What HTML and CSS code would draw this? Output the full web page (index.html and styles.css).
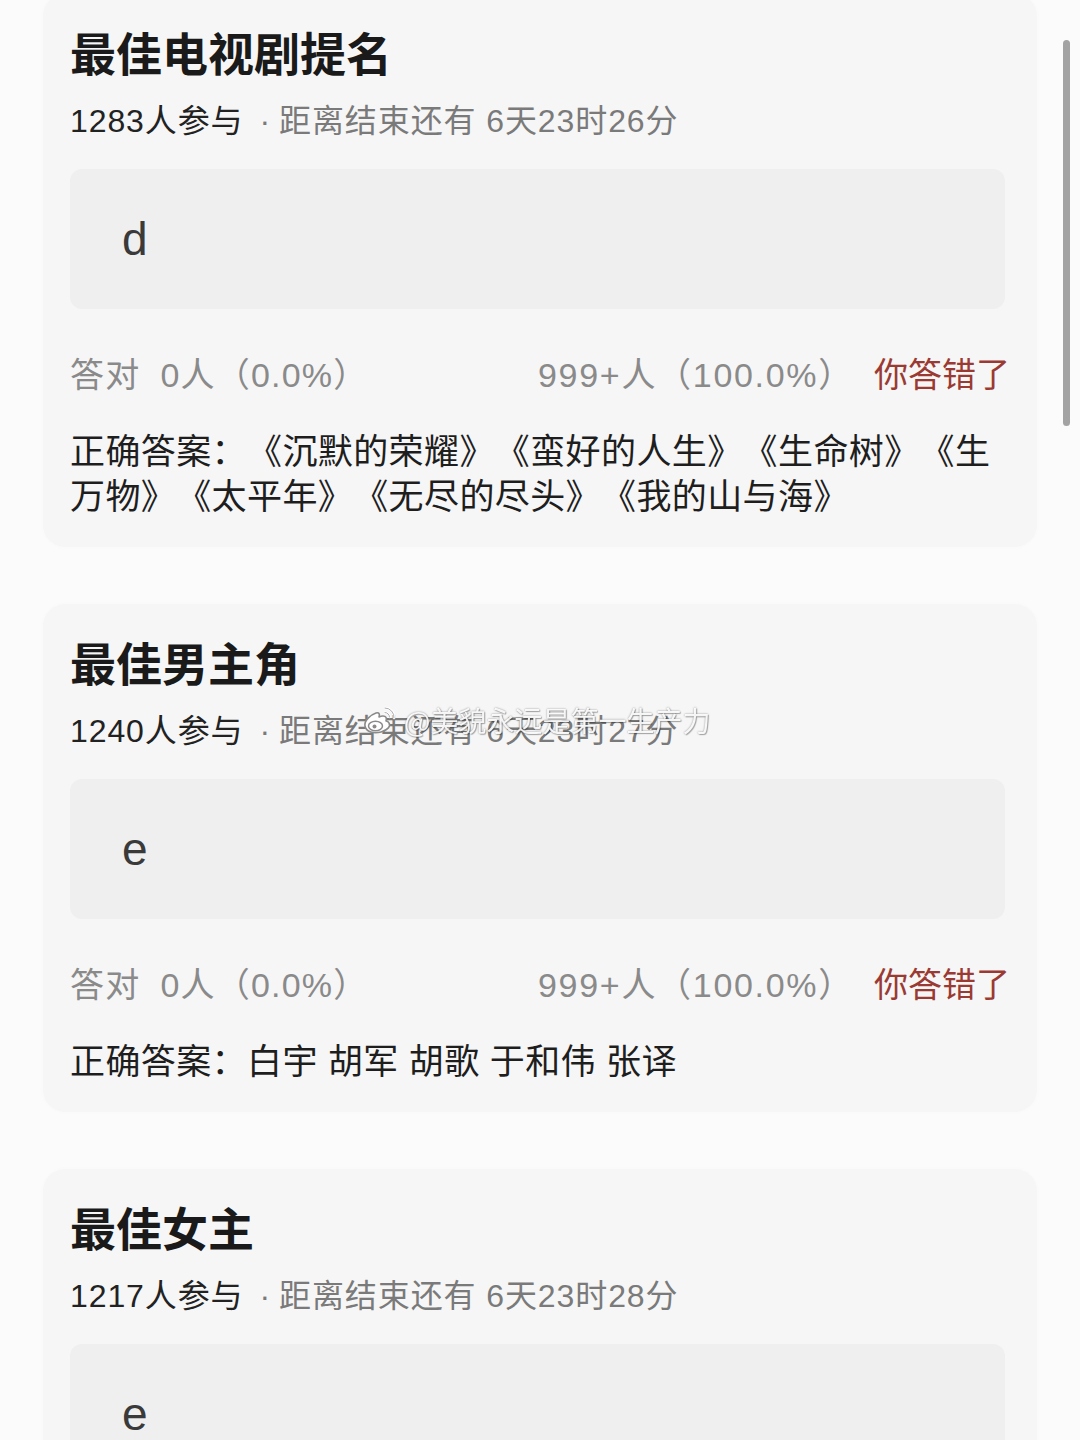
FILE: index.html
```html
<!DOCTYPE html>
<html lang="zh-CN">
<head>
<meta charset="utf-8">
<title>竞猜</title>
<link rel="stylesheet" href="styles.css">
</head>
<body>
<main class="list">
  <section class="card">
    <h2 class="card-title">最佳电视剧提名</h2>
    <p class="meta"><span class="count">1283人参与</span><span class="sep">·</span>距离结束还有 6天23时26分</p>
    <div class="answer">d</div>
    <div class="stats">
      <span class="ok"><span class="ok-label">答对</span>0人（0.0%）</span>
      <span class="wrong">999+人（100.0%）</span>
      <span class="verdict">你答错了</span>
    </div>
    <p class="correct">正确答案：《沉默的荣耀》《蛮好的人生》《生命树》《生万物》《太平年》《无尽的尽头》《我的山与海》</p>
  </section>

  <section class="card">
    <h2 class="card-title">最佳男主角</h2>
    <p class="meta"><span class="count">1240人参与</span><span class="sep">·</span>距离结束还有 6天23时27分</p>
    <div class="answer">e</div>
    <div class="stats">
      <span class="ok"><span class="ok-label">答对</span>0人（0.0%）</span>
      <span class="wrong">999+人（100.0%）</span>
      <span class="verdict">你答错了</span>
    </div>
    <p class="correct">正确答案：白宇 胡军 胡歌 于和伟 张译</p>
  </section>

  <section class="card">
    <h2 class="card-title">最佳女主</h2>
    <p class="meta"><span class="count">1217人参与</span><span class="sep">·</span>距离结束还有 6天23时28分</p>
    <div class="answer">e</div>
  </section>
</main>

<div class="scroll-indicator"></div>

<div class="watermark">
  <svg class="wb-logo" width="36" height="32" viewBox="0 0 36 32" aria-hidden="true">
    <path d="M14 9 C8 11 2 17 3 22 C4 28 12 30 19 28 C26 26 29 22 27 19 C26 17 24 17 24 17 C25 14 24 12 21 12 C19 12 17 13 17 13 C18 10 17 8 14 9 Z" fill="#ffffff" stroke="#8a8a8a" stroke-width="1.6" stroke-linejoin="round"/>
    <ellipse cx="13.5" cy="22" rx="7" ry="4.8" fill="none" stroke="#8a8a8a" stroke-width="1.5"/>
    <circle cx="12.5" cy="22.5" r="2" fill="#8a8a8a"/>
    <path d="M23 4 A9 9 0 0 1 32 14" fill="none" stroke="#ffffff" stroke-width="2.6" stroke-linecap="round"/>
    <path d="M23 4 A9 9 0 0 1 32 14" fill="none" stroke="#8a8a8a" stroke-width="1" stroke-linecap="round" opacity="0.7"/>
    <path d="M23 8.5 A4.5 4.5 0 0 1 27.5 13" fill="none" stroke="#ffffff" stroke-width="2.4" stroke-linecap="round"/>
    <path d="M23 8.5 A4.5 4.5 0 0 1 27.5 13" fill="none" stroke="#8a8a8a" stroke-width="1" stroke-linecap="round" opacity="0.7"/>
  </svg>
  <span class="wm-text">@美貌永远是第一生产力</span>
</div>
</body>
</html>
```

FILE: styles.css
```css
html {
  overflow: hidden;
}

body {
  margin: 0;
  background: #fbfbfb;
  font-family: "Liberation Sans", "Noto Sans CJK SC", sans-serif;
  color: #1c1c1c;
  text-spacing-trim: space-all;
}

.list {
  display: flex;
  flex-direction: column;
  gap: 57px;
  margin-top: -6px;
  padding: 0 43px 0 43px;
}

.card {
  background: #f6f6f6;
  border-radius: 22px;
  padding: 27px 32px 28px 27px;
  box-shadow: 0 0 6px rgba(0, 0, 0, 0.015);
}

.card-title {
  margin: 0;
  font-family: "Noto Sans CJK SC", sans-serif;
  font-size: 46px;
  font-weight: 700;
  line-height: 60px;
  color: #1a1a1a;
}

.meta {
  margin: 18px 0 0;
  font-size: 32px;
  line-height: 44px;
  letter-spacing: 0.9px;
  color: #7a7a7a;
}

.meta .count {
  color: #222;
}

.meta .sep {
  margin: 0 8px 0 16px;
}

.answer {
  margin-top: 26px;
  height: 140px;
  display: flex;
  align-items: center;
  padding-left: 52px;
  background: #efefef;
  border-radius: 12px;
  font-size: 46px;
  color: #3a3a3a;
}

.stats {
  display: flex;
  align-items: center;
  margin: 42px -5px 0 0;
  font-size: 34px;
  line-height: 48px;
  color: #8a8a8a;
}

.ok {
  flex: 1;
  letter-spacing: 1.2px;
}

.ok-label {
  margin-right: 20px;
}

.wrong {
  margin-right: 20px;
  letter-spacing: 1.7px;
}

.verdict {
  color: #9a3a33;
}

.correct {
  margin: 30px 0 0;
  font-size: 35px;
  line-height: 45px;
  letter-spacing: 0.4px;
  color: #1e1e1e;
}

.scroll-indicator {
  position: fixed;
  top: 40px;
  right: 10px;
  width: 7px;
  height: 386px;
  border-radius: 4px;
  background: #a3a3a3;
}

.watermark {
  position: fixed;
  left: 362px;
  top: 702px;
  display: flex;
  align-items: center;
  gap: 6px;
}

.wm-text {
  font-family: "Noto Sans CJK SC", sans-serif;
  font-size: 28px;
  line-height: 36px;
  color: rgba(255, 255, 255, 0.92);
  text-shadow: 0 0 2px rgba(0, 0, 0, 0.45), 1px 1px 1px rgba(0, 0, 0, 0.25);
}
```
